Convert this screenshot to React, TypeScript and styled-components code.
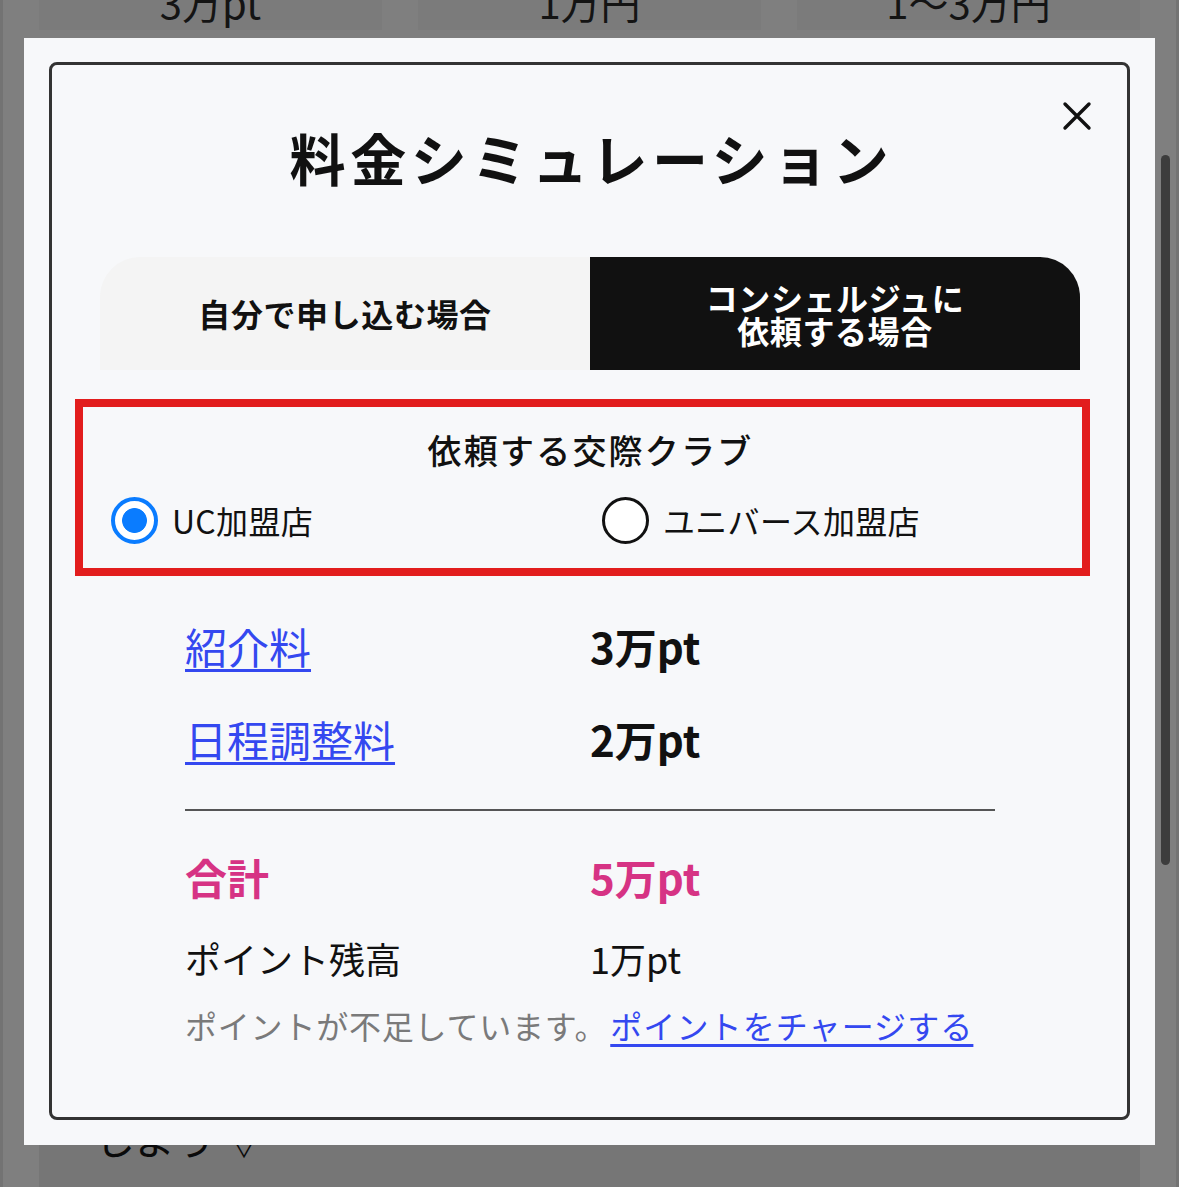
import React, { useState } from 'react'
import styled, { createGlobalStyle } from 'styled-components'

const GlobalStyle = createGlobalStyle`
  html, body {
    margin: 0;
    padding: 0;
    background: #7f7f7f;
  }
  body {
    font-family: 'Noto Sans CJK JP', 'Noto Sans', sans-serif;
    color: #111;
  }
  * {
    box-sizing: border-box;
  }
`

type Club = 'uc' | 'universe'

function App() {
  const [club, setClub] = useState<Club>('uc')
  const [tab, setTab] = useState<'self' | 'concierge'>('concierge')

  return (
    <>
      <GlobalStyle />
      <PageWrapper>
        <PriceRow>
          <PriceCell>3万pt</PriceCell>
          <PriceCell>1万円</PriceCell>
          <PriceCell>1〜3万円</PriceCell>
        </PriceRow>
        <BottomCard>
          <BottomText>しよう ▽</BottomText>
        </BottomCard>
        <ScrollThumb />
      </PageWrapper>

      <Modal>
        <ModalFrame>
          <CloseButton aria-label="閉じる">
            <svg width="30" height="30" viewBox="0 0 30 30">
              <path d="M3 3 L27 27 M27 3 L3 27" stroke="#111" strokeWidth="3.4" strokeLinecap="round" />
            </svg>
          </CloseButton>

          <Title>料金シミュレーション</Title>

          <Tabs>
            <Tab $active={tab === 'self'} $side="left" onClick={() => setTab('self')}>
              自分で申し込む場合
            </Tab>
            <Tab $active={tab === 'concierge'} $side="right" onClick={() => setTab('concierge')}>
              コンシェルジュに
              <br />
              依頼する場合
            </Tab>
          </Tabs>

          <ClubBox>
            <ClubTitle>依頼する交際クラブ</ClubTitle>
            <RadioGroup>
              <RadioLabel onClick={() => setClub('uc')}>
                <RadioCircle $checked={club === 'uc'} />
                UC加盟店
              </RadioLabel>
              <RadioLabel onClick={() => setClub('universe')}>
                <RadioCircle $checked={club === 'universe'} />
                ユニバース加盟店
              </RadioLabel>
            </RadioGroup>
          </ClubBox>

          <FeeTable>
            <FeeRow $top={40}>
              <FeeLink href="#">紹介料</FeeLink>
              <FeeValue>3万pt</FeeValue>
            </FeeRow>
            <FeeRow $top={33}>
              <FeeLink href="#">日程調整料</FeeLink>
              <FeeValue>2万pt</FeeValue>
            </FeeRow>
            <Divider />
            <FeeRow $top={36}>
              <TotalText>合計</TotalText>
              <TotalText>5万pt</TotalText>
            </FeeRow>
            <BalanceRow>
              <span>ポイント残高</span>
              <span>1万pt</span>
            </BalanceRow>
            <Note>
              ポイントが不足しています。<NoteLink href="#">ポイントをチャージする</NoteLink>
            </Note>
          </FeeTable>
        </ModalFrame>
      </Modal>
    </>
  )
}

export default App

const PageWrapper = styled.div`
  position: relative;
  height: 1187px;
  overflow: hidden;
  background: #7f7f7f;
  border-left: 3px solid #737373;
  border-right: 3px solid #737373;
`

const PriceRow = styled.div`
  display: grid;
  grid-template-columns: 1fr 1fr 1fr;
  margin: -26px 36px 0;
  gap: 36px;
`

const PriceCell = styled.div`
  text-align: center;
  font-size: 40px;
  line-height: 56px;
  color: #141414;
  background: #7b7b7b;
`

const BottomCard = styled.div`
  margin: 1046px 36px 0;
  height: 200px;
  border-radius: 40px;
  background: #767676;
  padding: 38px 56px;
`

const BottomText = styled.div`
  font-size: 40px;
  line-height: 48px;
  color: #0a0a0a;
`

const ScrollThumb = styled.div`
  position: absolute;
  left: 1158px;
  top: 155px;
  width: 9px;
  height: 710px;
  border-radius: 5px;
  background: #3d3d3d;
`

const Modal = styled.div`
  position: fixed;
  left: 24px;
  top: 38px;
  width: 1131px;
  height: 1107px;
  background: #f7f8fa;
  padding: 24px 25px 25px;
`

const ModalFrame = styled.div`
  position: relative;
  height: 100%;
  border: 3px solid #333;
  border-radius: 8px;
  padding-top: 52px;
`

const CloseButton = styled.button`
  position: absolute;
  top: 36px;
  right: 35px;
  width: 30px;
  height: 30px;
  padding: 0;
  border: none;
  background: none;
  display: flex;
  cursor: pointer;
`

const Title = styled.h1`
  margin: 0;
  padding-left: 4px;
  text-align: center;
  font-size: 56px;
  line-height: 80px;
  font-weight: 700;
  letter-spacing: 4.6px;
  color: #111;
`

const Tabs = styled.div`
  display: grid;
  grid-template-columns: 1fr 1fr;
  margin: 60px 47px 0 48px;
  height: 113px;
`

const Tab = styled.button<{ $active: boolean; $side: 'left' | 'right' }>`
  border: none;
  font-family: inherit;
  display: flex;
  align-items: center;
  justify-content: center;
  text-align: center;
  font-size: 32px;
  line-height: 33px;
  font-weight: 700;
  letter-spacing: 0.6px;
  cursor: pointer;
  background: ${(p) => (p.$active ? '#111' : '#f4f4f4')};
  color: ${(p) => (p.$active ? '#fff' : '#111')};
  border-radius: ${(p) => (p.$side === 'left' ? '40px 0 0 0' : '0 40px 0 0')};
`

const ClubBox = styled.div`
  margin: 29px 37px 0 23px;
  border: 8px solid #e21d1d;
  padding: 19px 0 24px;
`

const ClubTitle = styled.div`
  text-align: center;
  padding-left: 16px;
  font-size: 34px;
  line-height: 48px;
  font-weight: 500;
  letter-spacing: 2.2px;
`

const RadioGroup = styled.div`
  display: grid;
  grid-template-columns: 491px 1fr;
  margin-top: 21px;
  padding-left: 28px;
`

const RadioLabel = styled.label`
  display: flex;
  align-items: center;
  gap: 14px;
  font-size: 32px;
  line-height: 48px;
  letter-spacing: 0.3px;
  cursor: pointer;
`

const RadioCircle = styled.span<{ $checked: boolean }>`
  width: 47px;
  height: 47px;
  border-radius: 50%;
  flex: none;
  margin-top: 2px;
  border: ${(p) => (p.$checked ? '4px solid #0a7cff' : '3px solid #111')};
  background: ${(p) => (p.$checked ? 'radial-gradient(circle, #0a7cff 0 12px, #fff 12.8px)' : '#fff')};
`

const FeeTable = styled.div`
  padding: 0 132px 0 133px;
`

const FeeRow = styled.div<{ $top: number }>`
  display: grid;
  grid-template-columns: 1fr 1fr;
  align-items: center;
  height: 60px;
  margin-top: ${(p) => p.$top}px;
`

const FeeLink = styled.a`
  justify-self: start;
  font-size: 42px;
  line-height: 60px;
  color: #3448f0;
  text-decoration: underline;
  text-decoration-thickness: 3px;
  text-underline-offset: 5px;
`

const FeeValue = styled.span`
  font-size: 42px;
  line-height: 60px;
  font-weight: 700;
  color: #111;
`

const TotalText = styled.span`
  font-size: 42px;
  line-height: 60px;
  font-weight: 700;
  color: #d63384;
`

const Divider = styled.hr`
  margin: 40px 0 0;
  border: none;
  height: 2px;
  background: #555;
`

const BalanceRow = styled.div`
  display: grid;
  grid-template-columns: 1fr 1fr;
  margin-top: 23px;
  font-size: 36px;
  line-height: 56px;
  color: #111;
`

const Note = styled.div`
  margin-top: 17px;
  font-size: 32px;
  line-height: 44px;
  letter-spacing: 0.8px;
  color: #7a7a7a;
  white-space: nowrap;
`

const NoteLink = styled.a`
  margin-left: 3px;
  letter-spacing: 1.1px;
  color: #3448f0;
  text-decoration: underline;
  text-decoration-thickness: 3px;
  text-underline-offset: 5px;
`
